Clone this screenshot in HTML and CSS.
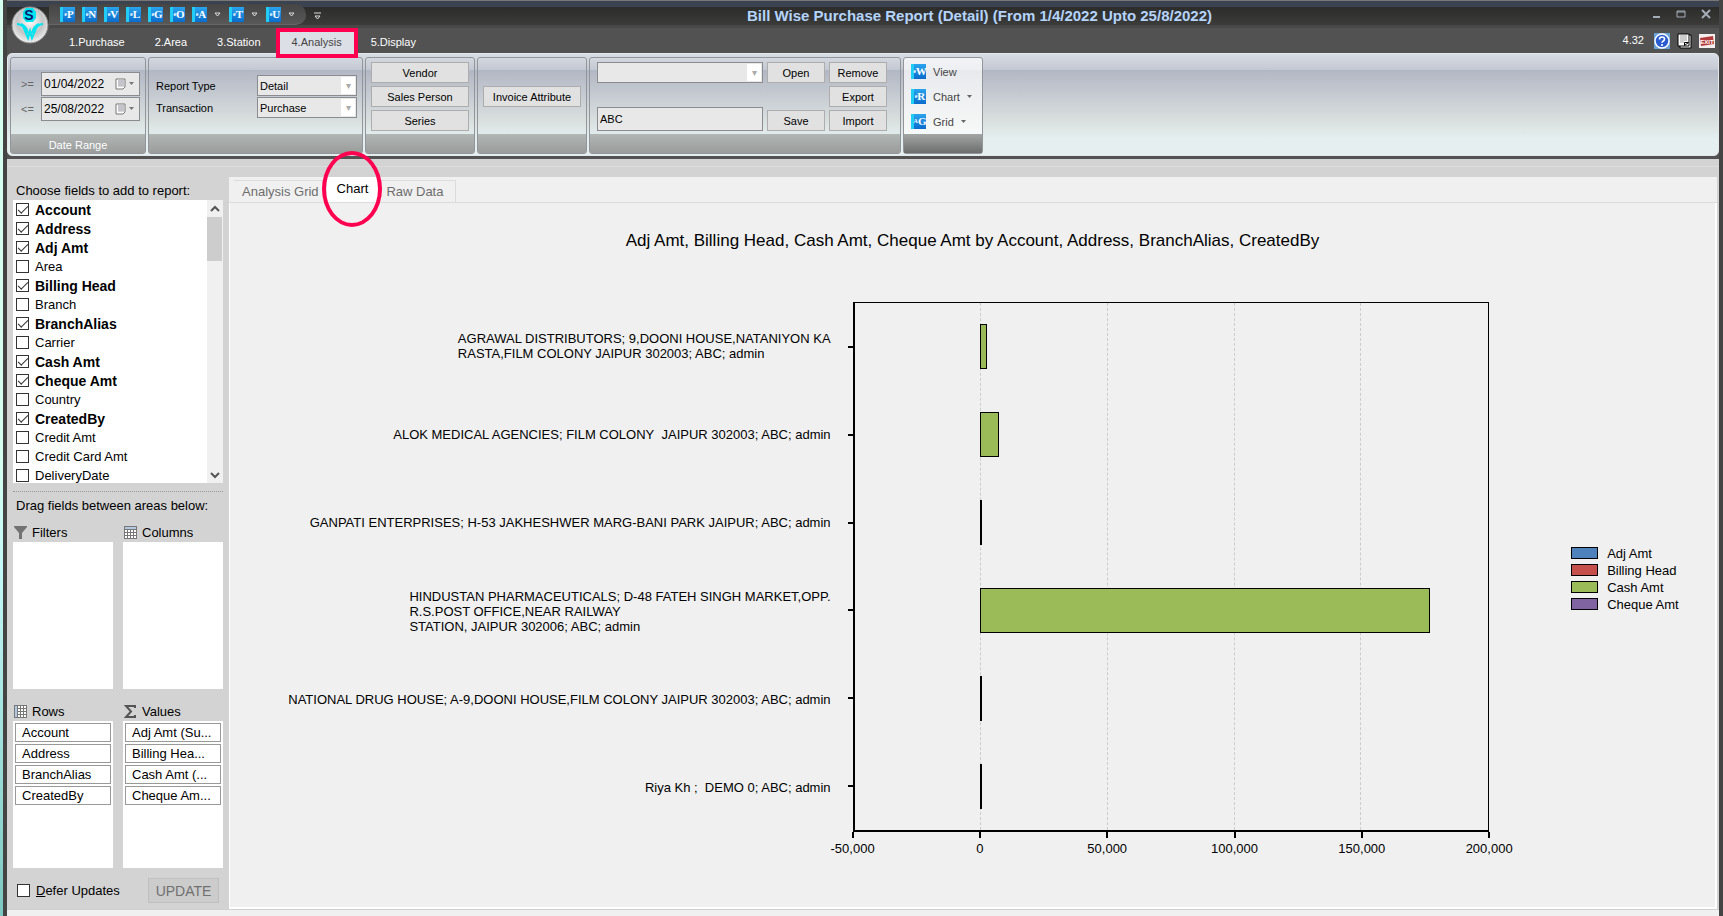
FILE: index.html
```html
<!DOCTYPE html>
<html lang="en">

<head>
    <meta charset="utf-8">
    <title>Bill Wise Purchase Report (Detail)</title>
    <link rel="stylesheet" href="styles.css">
</head>

<body>
    <div class="window">
        <header class="titlebar">
            <button class="orb" aria-label="Menu">
                <svg width="38" height="38" viewBox="0 0 38 38">
                    <defs>
                        <radialGradient id="orbFill" cx="50%" cy="40%" r="60%">
                            <stop offset="0" stop-color="#ffffff" />
                            <stop offset="0.6" stop-color="#c4c4c4" />
                            <stop offset="1" stop-color="#f2f2f2" />
                        </radialGradient>
                    </defs>
                    <circle cx="19" cy="19" r="18" fill="url(#orbFill)" stroke="#8a8a8a" />
                    <path d="M15 2h7l3 4v6l-3 4h-7l-3-4V6z" fill="#00e5f0" />
                    <text x="18" y="14" text-anchor="middle" class="orb-letter">S</text>
                    <path d="M6 18q6 0 8 7l3 7 2-7 2 7 3-7q2-7 8-7M10 18q5 2 7 9M28 18q-5 2-7 9" fill="none" stroke="#00e5f0" stroke-width="2" />
                </svg>
            </button>
            <div class="quick">
                <button><small>e</small>P</button>
                <button><small>e</small>N</button>
                <button><small>e</small>V</button>
                <button><small>e</small>L</button>
                <button><small>e</small>G</button>
                <button><small>e</small>O</button>
                <button><small>e</small>A</button>
                <svg class="caret" width="7" height="5" viewBox="0 0 7 5"><path d="M1 1h5L3.500 4z" /></svg>
                <button><small>e</small>T</button>
                <svg class="caret" width="7" height="5" viewBox="0 0 7 5"><path d="M1 1h5L3.500 4z" /></svg>
                <button><small>e</small>U</button>
                <svg class="caret" width="7" height="5" viewBox="0 0 7 5"><path d="M1 1h5L3.500 4z" /></svg>
            </div>
            <svg class="customize" width="7" height="8" viewBox="0 0 7 8"><path d="M0 1h7M1 4h5L3.500 7z" /></svg>
            <h1>Bill Wise Purchase Report (Detail) (From 1/4/2022 Upto 25/8/2022)</h1>
            <div class="win-buttons">
                <button aria-label="Minimize"><svg width="10" height="10" viewBox="0 0 10 10"><path d="M2 8h7" stroke-width="2" /></svg></button>
                <button aria-label="Maximize"><svg width="10" height="10" viewBox="0 0 10 10"><path d="M1 2h8v6H1zM1 3h8" /></svg></button>
                <button aria-label="Close"><svg width="10" height="10" viewBox="0 0 10 10"><path d="M1 1l8 8M9 1l-8 8" stroke-width="2" /></svg></button>
            </div>
        </header>

        <nav class="menu">
            <a href="#">1.Purchase</a>
            <a href="#">2.Area</a>
            <a href="#">3.Station</a>
            <a href="#" class="active">4.Analysis</a>
            <a href="#">5.Display</a>
            <div class="menu-right">
                <span>4.32</span>
                <svg width="16" height="16" viewBox="0 0 16 16">
                    <path d="M0 0h16v16H0z" fill="#6aa2d8" />
                    <circle cx="8" cy="8" r="7" fill="#2a5bd0" stroke="#fff" stroke-width="1.500" />
                    <path d="M5.500 6.500q0-2.500 2.500-2.500t2.500 2q0 1.500-1.500 2.200-1 .5-1 1.500M8 11v2" fill="none" stroke="#fff" stroke-width="1.600" />
                </svg>
                <svg width="15" height="16" viewBox="0 0 15 16">
                    <path d="M3 2h11v13H3z" fill="#fff" stroke="#000" />
                    <path d="M1 1h11v12H1z" fill="#fff" stroke="#000" />
                    <path d="M3 3h7M3 5h7M3 7h7M3 9h4" stroke="#999" />
                    <path d="M7.500 12.500v-3h4z" fill="#fff" stroke="#000" />
                </svg>
                <svg width="16" height="14" viewBox="0 0 16 14">
                    <path d="M0 0h16v14H0z" fill="#f5eeee" />
                    <path d="M1 4l13-2 1 8-13 2z" fill="#b33a3a" />
                    <text x="8" y="10" text-anchor="middle" class="exit-text">EXIT</text>
                </svg>
            </div>
        </nav>

        <div class="ribbon">
            <section class="group group-dates">
                <div class="group-body">
                    <label for="dateFrom">&gt;=</label>
                    <div class="date">
                        <input type="text" id="dateFrom" value="01/04/2022">
                        <svg width="20" height="12" viewBox="0 0 20 12"><path d="M1 1h9v8l-2 2H1z" class="cal" /><path d="M3 3h6M3 5h6M3 7h6M4 2v7M6 2v7M8 2v7" class="cal-lines" /><path d="M14 4h5l-2.500 3z" fill="#777" /></svg>
                    </div>
                    <label for="dateTo">&lt;=</label>
                    <div class="date">
                        <input type="text" id="dateTo" value="25/08/2022">
                        <svg width="20" height="12" viewBox="0 0 20 12"><path d="M1 1h9v8l-2 2H1z" class="cal" /><path d="M3 3h6M3 5h6M3 7h6M4 2v7M6 2v7M8 2v7" class="cal-lines" /><path d="M14 4h5l-2.500 3z" fill="#777" /></svg>
                    </div>
                </div>
                <footer>Date Range</footer>
            </section>

            <section class="group group-type">
                <div class="group-body">
                    <label for="reportType">Report Type</label>
                    <div class="select"><select id="reportType"><option>Detail</option></select></div>
                    <label for="transaction">Transaction</label>
                    <div class="select"><select id="transaction"><option>Purchase</option></select></div>
                </div>
                <footer></footer>
            </section>

            <section class="group group-party">
                <div class="group-body">
                    <button class="btn">Vendor</button>
                    <button class="btn">Sales Person</button>
                    <button class="btn">Series</button>
                </div>
                <footer></footer>
            </section>

            <section class="group group-attr">
                <div class="group-body">
                    <button class="btn">Invoice Attribute</button>
                </div>
                <footer></footer>
            </section>

            <section class="group group-layout">
                <div class="group-body">
                    <div class="select"><select aria-label="Saved layout"><option></option></select></div>
                    <button class="btn">Open</button>
                    <button class="btn">Remove</button>
                    <button class="btn export">Export</button>
                    <input type="text" value="ABC" aria-label="Layout name">
                    <button class="btn">Save</button>
                    <button class="btn">Import</button>
                </div>
                <footer></footer>
            </section>

            <section class="group group-print">
                <div class="group-body">
                    <button><span class="book"><small>e</small>W</span>View</button>
                    <button><span class="book"><small>e</small>R</span>Chart <svg width="5" height="4" viewBox="0 0 5 4"><path d="M0 0h5L2.500 3z" fill="#666" /></svg></button>
                    <button><span class="book"><small>A</small>G</span>Grid <svg width="5" height="4" viewBox="0 0 5 4"><path d="M0 0h5L2.500 3z" fill="#666" /></svg></button>
                </div>
                <footer></footer>
            </section>
        </div>

        <main>
            <aside>
                <p>Choose fields to add to report:</p>
                <div class="fields">
                    <div class="field-list">
                        <label><input type="checkbox" checked><span>Account</span></label>
                        <label><input type="checkbox" checked><span>Address</span></label>
                        <label><input type="checkbox" checked><span>Adj Amt</span></label>
                        <label><input type="checkbox"><span>Area</span></label>
                        <label><input type="checkbox" checked><span>Billing Head</span></label>
                        <label><input type="checkbox"><span>Branch</span></label>
                        <label><input type="checkbox" checked><span>BranchAlias</span></label>
                        <label><input type="checkbox"><span>Carrier</span></label>
                        <label><input type="checkbox" checked><span>Cash Amt</span></label>
                        <label><input type="checkbox" checked><span>Cheque Amt</span></label>
                        <label><input type="checkbox"><span>Country</span></label>
                        <label><input type="checkbox" checked><span>CreatedBy</span></label>
                        <label><input type="checkbox"><span>Credit Amt</span></label>
                        <label><input type="checkbox"><span>Credit Card Amt</span></label>
                        <label><input type="checkbox"><span>DeliveryDate</span></label>
                    </div>
                    <div class="scrollbar">
                        <svg width="15" height="17" viewBox="0 0 15 17"><path d="M4 11l4-4 4 4" /></svg>
                        <div class="thumb"></div>
                        <svg width="15" height="17" viewBox="0 0 15 17"><path d="M4 7l4 4 4-4" /></svg>
                    </div>
                </div>
                <p class="areas-title">Drag fields between areas below:</p>
                <div class="areas">
                    <section>
                        <h2><svg width="13" height="13" viewBox="0 0 13 13"><path d="M0 0h13v1L8 7v6H5V7L0 1z" fill="#737373" /></svg>Filters</h2>
                        <ul></ul>
                    </section>
                    <section>
                        <h2><svg width="13" height="13" viewBox="0 0 13 13"><path d="M0 0h13v13H0z" fill="#777" /><path d="M1 1h11v2H1z" fill="#b4c8e4" /><path d="M1 4h2v2H1zM4 4h2v2H4zM7 4h2v2H7zM10 4h2v2h-2zM1 7h2v2H1zM4 7h2v2H4zM7 7h2v2H7zM10 7h2v2h-2zM1 10h2v2H1zM4 10h2v2H4zM7 10h2v2H7zM10 10h2v2h-2z" fill="#fff" /></svg>Columns</h2>
                        <ul></ul>
                    </section>
                    <section>
                        <h2><svg width="13" height="13" viewBox="0 0 13 13"><path d="M0 0h13v13H0z" fill="#777" /><path d="M1 1h2v11H1z" fill="#b4c8e4" /><path d="M4 1h2v2H4zM7 1h2v2H7zM10 1h2v2h-2zM4 4h2v2H4zM7 4h2v2H7zM10 4h2v2h-2zM4 7h2v2H4zM7 7h2v2H7zM10 7h2v2h-2zM4 10h2v2H4zM7 10h2v2H7zM10 10h2v2h-2z" fill="#fff" /></svg>Rows</h2>
                        <ul>
                            <li>Account</li>
                            <li>Address</li>
                            <li>BranchAlias</li>
                            <li>CreatedBy</li>
                        </ul>
                    </section>
                    <section>
                        <h2><svg width="13" height="13" viewBox="0 0 13 13"><path d="M11 3V1H2l5 5.500L2 12h9v-2" fill="none" stroke="#555" stroke-width="2" /></svg>Values</h2>
                        <ul>
                            <li>Adj Amt (Su...</li>
                            <li>Billing Hea...</li>
                            <li>Cash Amt (...</li>
                            <li>Cheque Am...</li>
                        </ul>
                    </section>
                </div>
                <div class="defer">
                    <label><input type="checkbox"><span><u>D</u>efer Updates</span></label>
                    <button disabled>UPDATE</button>
                </div>
            </aside>

            <div class="report">
                <nav class="tabs">
                    <a href="#">Analysis Grid</a>
                    <a href="#" class="active">Chart</a>
                    <a href="#">Raw Data</a>
                </nav>
                <div class="chart">
                    <h2>Adj Amt, Billing Head, Cash Amt, Cheque Amt by Account, Address, BranchAlias, CreatedBy</h2>
                    <div class="names">
                        <div><span>AGRAWAL DISTRIBUTORS; 9,DOONI HOUSE,NATANIYON KA<br>RASTA,FILM COLONY JAIPUR 302003; ABC; admin</span></div>
                        <div><span>ALOK MEDICAL AGENCIES; FILM COLONY&nbsp; JAIPUR 302003; ABC; admin</span></div>
                        <div><span>GANPATI ENTERPRISES; H-53 JAKHESHWER MARG-BANI PARK JAIPUR; ABC; admin</span></div>
                        <div><span>HINDUSTAN PHARMACEUTICALS; D-48 FATEH SINGH MARKET,OPP.<br>R.S.POST OFFICE,NEAR RAILWAY<br>STATION, JAIPUR 302006; ABC; admin</span></div>
                        <div><span>NATIONAL DRUG HOUSE; A-9,DOONI HOUSE,FILM COLONY JAIPUR 302003; ABC; admin</span></div>
                        <div><span>Riya Kh ;&nbsp; DEMO 0; ABC; admin</span></div>
                    </div>
                    <div class="plot">
                        <div class="gridlines"><i></i><i></i><i></i><i></i><i></i></div>
                        <div class="row"><div class="bar" style="width: 1%"></div></div>
                        <div class="row"><div class="bar" style="width: 3%"></div></div>
                        <div class="row"><div class="bar" style="width: 0%"></div></div>
                        <div class="row"><div class="bar" style="width: 71%"></div></div>
                        <div class="row"><div class="bar" style="width: 0%"></div></div>
                        <div class="row"><div class="bar" style="width: 0%"></div></div>
                    </div>
                    <ul class="legend">
                        <li class="adj">Adj Amt</li>
                        <li class="billing">Billing Head</li>
                        <li class="cash">Cash Amt</li>
                        <li class="cheque">Cheque Amt</li>
                    </ul>
                    <div class="axis">
                        <span>-50,000</span><span>0</span><span>50,000</span><span>100,000</span><span>150,000</span><span>200,000</span>
                    </div>
                </div>
            </div>
        </main>
        <div class="status"></div>
    </div>
</body>

</html>
```
FILE: styles.css
```css
*,
*::before,
*::after {
    box-sizing: border-box;
}

body {
    margin: 0;
    padding-left: 3px;
    background: linear-gradient(#d5fff0, #d5fff0 50%, #c5f8f8 62%, #7cc8c0);
    font-family: "Liberation Sans", Arial, sans-serif;
    font-size: 13px;
    color: #000;
}

h1, h2, p, ul {
    margin: 0;
    padding: 0;
    font-weight: normal;
    list-style: none;
}

button, input, select {
    margin: 0;
    font-family: inherit;
}

a {
    text-decoration: none;
}

svg {
    display: block;
    flex: none;
}

.window {
    display: flex;
    flex-direction: column;
    min-height: 100vh;
    border-left: 4px solid #444;
    border-right: 4px solid #444;
    background: #525252;
}

/* title bar */
.titlebar {
    display: flex;
    height: 28px;
    padding-top: 4px;
    background: linear-gradient(#777 1px, #3c4350 1px, #3c4350 7px, #2c2c2a 7px, #3b3b39 25px, #484848 25px);
}

.orb {
    flex: none;
    width: 38px;
    height: 38px;
    margin: 2px 0 0 4px;
    padding: 0;
    border: none;
    border-radius: 50%;
    background: none;
    z-index: 1;
}

.orb-letter {
    font-size: 14px;
    font-weight: bold;
    fill: #001a70;
}

.quick {
    display: flex;
    align-items: center;
    gap: 7px;
    height: 21px;
    padding: 0 11px 0 11px;
    border-bottom: 1px solid #666;
    border-radius: 0 11px 11px 0;
    background: linear-gradient(#454545, #585858);
}

.quick button,
.book {
    display: flex;
    flex: none;
    align-items: center;
    justify-content: center;
    width: 15px;
    height: 15px;
    padding: 0;
    border: none;
    border-left: 3px solid #22cdf5;
    background: linear-gradient(#2aa4ee, #0a6ccc);
    color: #fff;
    font: bold 11px/15px "Liberation Serif", serif;
}

.quick small,
.book small {
    font-size: 6px;
}

.caret,
.customize {
    fill: none;
    stroke: #ddd;
}

.caret + button {
    margin-left: 1px;
}

.customize {
    margin: 8px 0 0 8px;
}

h1 {
    flex: 1;
    padding-right: 13px;
    color: #b4d4fb;
    font-size: 15px;
    font-weight: bold;
    line-height: 23px;
    text-align: center;
}

.win-buttons {
    display: flex;
    gap: 15px;
    padding: 5px 8px 0 0;
}

.win-buttons button {
    width: 10px;
    height: 10px;
    padding: 0;
    border: none;
    background: none;
}

.win-buttons path {
    fill: none;
    stroke: #a4acb8;
}

/* menu tabs */
.menu {
    display: flex;
    height: 25px;
    padding-left: 47px;
    font-size: 11px;
    line-height: 29px;
}

.menu a {
    padding: 0 15px;
    color: #fff;
}

.menu .active {
    height: 30px;
    padding: 0 12px;
    border: 4px solid #ff0050;
    background: #dcdfe6;
    color: #444;
    line-height: 20px;
    z-index: 1;
}

.menu .active + a {
    padding-left: 13px;
}

.menu-right {
    display: flex;
    align-items: center;
    gap: 7px;
    height: 25px;
    margin-left: auto;
    padding-right: 4px;
    color: #fff;
}

.menu-right span {
    margin-right: 3px;
}

.exit-text {
    font-size: 6px;
    font-weight: bold;
    fill: #fff;
}

/* ribbon */
.ribbon {
    display: flex;
    gap: 2px;
    height: 103px;
    padding: 3px 2px 1px;
    border: 1px solid #e4e8ea;
    border-radius: 5px;
    background: linear-gradient(#d8dce4, #c3c8d2 16px, #b2b7c4 16px, #d8dede 65px, #e5efef 85px, #e5efef);
    font-size: 11px;
}

.group {
    display: flex;
    flex-direction: column;
    border: 1px solid #92969a;
    border-radius: 3px;
}

.group-body {
    flex: 1;
}

.group footer {
    height: 19px;
    background: linear-gradient(#b2b6b5, #999c9b);
    color: #fff;
    font-size: 11px;
    line-height: 22px;
    text-align: center;
}

.group-dates { width: 136px; }
.group-type { width: 215px; }
.group-party { width: 110px; }
.group-attr { width: 110px; }
.group-layout { width: 312px; }
.group-print { width: 80px; }

.group-dates .group-body {
    display: grid;
    grid-template-columns: 20px 99px;
    grid-auto-rows: 24px;
    align-content: start;
    align-items: center;
    gap: 1px 0;
    padding: 14px 0 0 10px;
    color: #666;
}

.date {
    display: flex;
    align-items: center;
    height: 24px;
    border: 1px solid #8a8c90;
    background: #e8e8e8;
}

.date input {
    width: 73px;
    padding: 0 2px;
    border: none;
    background: none;
    font-size: 12px;
}

.cal {
    fill: #fff;
    stroke: #777;
}

.cal-lines {
    stroke: #b0b0b8;
    stroke-width: 1;
}

.group-type .group-body {
    display: grid;
    grid-template-columns: 101px 100px;
    grid-auto-rows: 21px;
    align-content: start;
    align-items: center;
    gap: 1px 0;
    padding: 17px 0 0 7px;
}

.select {
    display: flex;
    position: relative;
    height: 21px;
    border: 1px solid #8a8c90;
    background: #e8e8e8;
}

.select select {
    width: 100%;
    padding: 0 2px;
    border: none;
    appearance: none;
    background: none;
    color: #000;
    font-size: 11px;
}

/* drop-down arrow cell */
.select::after {
    content: "▾";
    position: absolute;
    top: 1px;
    right: 1px;
    bottom: 1px;
    width: 14px;
    background: #fff;
    color: #aaa;
    font-size: 10px;
    line-height: 17px;
    text-align: center;
    pointer-events: none;
}

.btn {
    height: 21px;
    padding: 0;
    border: 1px solid #adadad;
    background: #e1e1e1;
    color: #000;
    font-size: 11px;
}

.group-party .group-body,
.group-attr .group-body {
    display: flex;
    flex-direction: column;
    gap: 3px;
    padding: 4px 5px 0;
}

.group-attr .group-body {
    padding-top: 28px;
}

.group-layout .group-body {
    display: grid;
    grid-template-columns: 166px 58px 58px;
    grid-auto-rows: 21px;
    align-content: start;
    gap: 3px 4px;
    padding: 4px 0 0 7px;
}

.group-layout .export {
    grid-column: 3;
}

.group-layout input {
    height: 24px;
    padding: 0 2px;
    border: 1px solid #8a8c90;
    background: #e8e8e8;
    font-size: 11px;
    align-self: end;
}

.group-print {
    background: rgba(255, 255, 255, 0.7);
}

.group-print .group-body {
    display: flex;
    flex-direction: column;
    gap: 10px;
    padding: 6px 7px 0;
}

.group-print .group-body button {
    display: flex;
    align-items: center;
    gap: 7px;
    height: 15px;
    padding: 0;
    border: none;
    background: none;
    color: #444;
    font-size: 11px;
}

.group-print footer {
    background: linear-gradient(#a4a6a5, #6c6e6d);
}

/* main area */
main {
    display: flex;
    flex: 1;
    margin-top: 3px;
    background: linear-gradient(#d3d3d3 7px, #dcdcdc 7px, #dcdcdc 8px, #d3d3d3 8px);
}

aside {
    width: 222px;
    padding: 24px 6px 0;
}

aside p {
    padding: 0 0 2px 3px;
    line-height: 15px;
}

.fields {
    display: flex;
    height: 283px;
    background: #fff;
}

.field-list {
    flex: 1;
    padding-left: 3px;
    overflow: hidden;
}

aside label {
    display: flex;
    align-items: center;
    gap: 6px;
    height: 19px;
}

aside input {
    display: grid;
    place-items: center;
    flex: none;
    width: 13px;
    height: 13px;
    border: 1px solid #333;
    appearance: none;
    background: #fff;
}

aside input:checked::before {
    content: "";
    width: 10px;
    height: 5px;
    margin-bottom: 3px;
    border: solid #333;
    border-width: 0 0 1px 1px;
    transform: rotate(-45deg);
}

aside input:checked + span {
    font-size: 14px;
    font-weight: bold;
}

.scrollbar {
    display: flex;
    flex-direction: column;
    width: 16px;
    background: #f0f0f0;
}

.scrollbar path {
    fill: none;
    stroke: #555;
    stroke-width: 2;
}

.scrollbar .thumb {
    width: 15px;
    height: 44px;
    margin-bottom: auto;
    background: #cdcdcd;
}

.areas-title {
    margin-top: 8px;
    border-top: 1px dotted #999;
}

aside .areas-title {
    padding-top: 6px;
}

.areas {
    display: grid;
    grid-template-columns: 1fr 1fr;
    gap: 12px 10px;
    margin-top: 7px;
}

.areas h2 {
    display: flex;
    align-items: center;
    gap: 5px;
    height: 20px;
    padding-left: 1px;
    font-size: 13px;
}

.areas ul {
    height: 147px;
    padding: 2px;
    background: #fff;
}

.areas li {
    height: 19px;
    margin-bottom: 2px;
    padding-left: 6px;
    border: 1px solid #999;
    line-height: 17px;
    white-space: nowrap;
}

.defer {
    display: flex;
    align-items: center;
    justify-content: space-between;
    margin: 10px 4px 0;
}

.defer button {
    width: 71px;
    height: 25px;
    padding: 0;
    border: 1px solid #bfbfbf;
    background: #ccc;
    color: #707070;
    font-size: 14px;
}

/* report */
.report {
    display: flex;
    flex: 1;
    flex-direction: column;
    margin: 18px 2px 0 0;
    background: #f0f0f0;
}

.tabs {
    display: flex;
    align-items: flex-end;
    height: 26px;
    padding-left: 5px;
    border-bottom: 1px solid #dcdcdc;
}

.tabs a {
    height: 22px;
    padding: 0 8px;
    border-top: 1px solid #dcdcdc;
    color: #6d6d6d;
    line-height: 22px;
}

.tabs a:last-child {
    padding-right: 12px;
    border-right: 1px solid #dcdcdc;
}

.tabs .active {
    position: relative;
    height: 25px;
    padding: 0 10px;
    border: none;
    background: #fff;
    color: #000;
    line-height: 24px;
}

/* marker ring round the open tab */
.tabs .active::after {
    content: "";
    position: absolute;
    top: -26px;
    left: 50%;
    width: 60px;
    height: 76px;
    margin-left: -30px;
    border: 4px solid #ff0050;
    border-radius: 50%;
    z-index: 1;
}

.chart {
    display: grid;
    flex: 1;
    grid-template-columns: 623fr 637fr 226fr;
    grid-template-rows: 99px 1fr 75px;
    border: solid #fff;
    border-width: 0 2px 2px 1px;
}

.chart h2 {
    grid-column: 1 / 4;
    padding-top: 28px;
    font-size: 17px;
    line-height: 20px;
    text-align: center;
}

.names {
    display: flex;
    flex-direction: column;
}

.names div {
    display: flex;
    flex: 1;
    align-items: center;
    justify-content: flex-end;
    padding-right: 22px;
    font-size: 13px;
    line-height: 15px;
    white-space: nowrap;
}

.plot {
    display: flex;
    flex-direction: column;
    position: relative;
    border: 1px solid #000;
    border-width: 1px 1px 2px 2px;
}

.gridlines {
    display: grid;
    grid-template-columns: repeat(5, 1fr);
    position: absolute;
    inset: 0;
}

.gridlines i {
    border-right: 1px dashed #ccc;
}

.gridlines i:last-child {
    border: none;
}

.row {
    display: flex;
    flex: 1;
    align-items: center;
    position: relative;
}

/* tick on the left axis */
.row::before {
    content: "";
    position: absolute;
    left: -7px;
    width: 6px;
    height: 2px;
    background: #000;
}

.bar {
    flex: none;
    height: 45px;
    margin-left: calc(20% - 1px);
    border: 1px solid #000;
    background: #9bbb59;
}

.legend {
    align-self: center;
    padding: 23px 0 0 82px;
}

.legend li {
    display: flex;
    align-items: center;
    gap: 9px;
    height: 17px;
    white-space: nowrap;
}

.legend li::before {
    content: "";
    width: 27px;
    height: 12px;
    border: 1px solid #000;
}

.legend .adj::before { background: #4f81bd; }
.legend .billing::before { background: #c5504b; }
.legend .cash::before { background: #9bbb59; }
.legend .cheque::before { background: #8064a2; }

.axis {
    display: flex;
    grid-column: 2;
    justify-content: space-between;
}

.axis span {
    display: flex;
    flex-direction: column;
    align-items: center;
    width: 0;
    line-height: 22px;
}

.axis span::before {
    content: "";
    flex: none;
    width: 2px;
    height: 6px;
    background: #000;
}

.status {
    height: 7px;
    border-top: 1px solid #d0d0d0;
    background: #f0f0f0;
}
```
